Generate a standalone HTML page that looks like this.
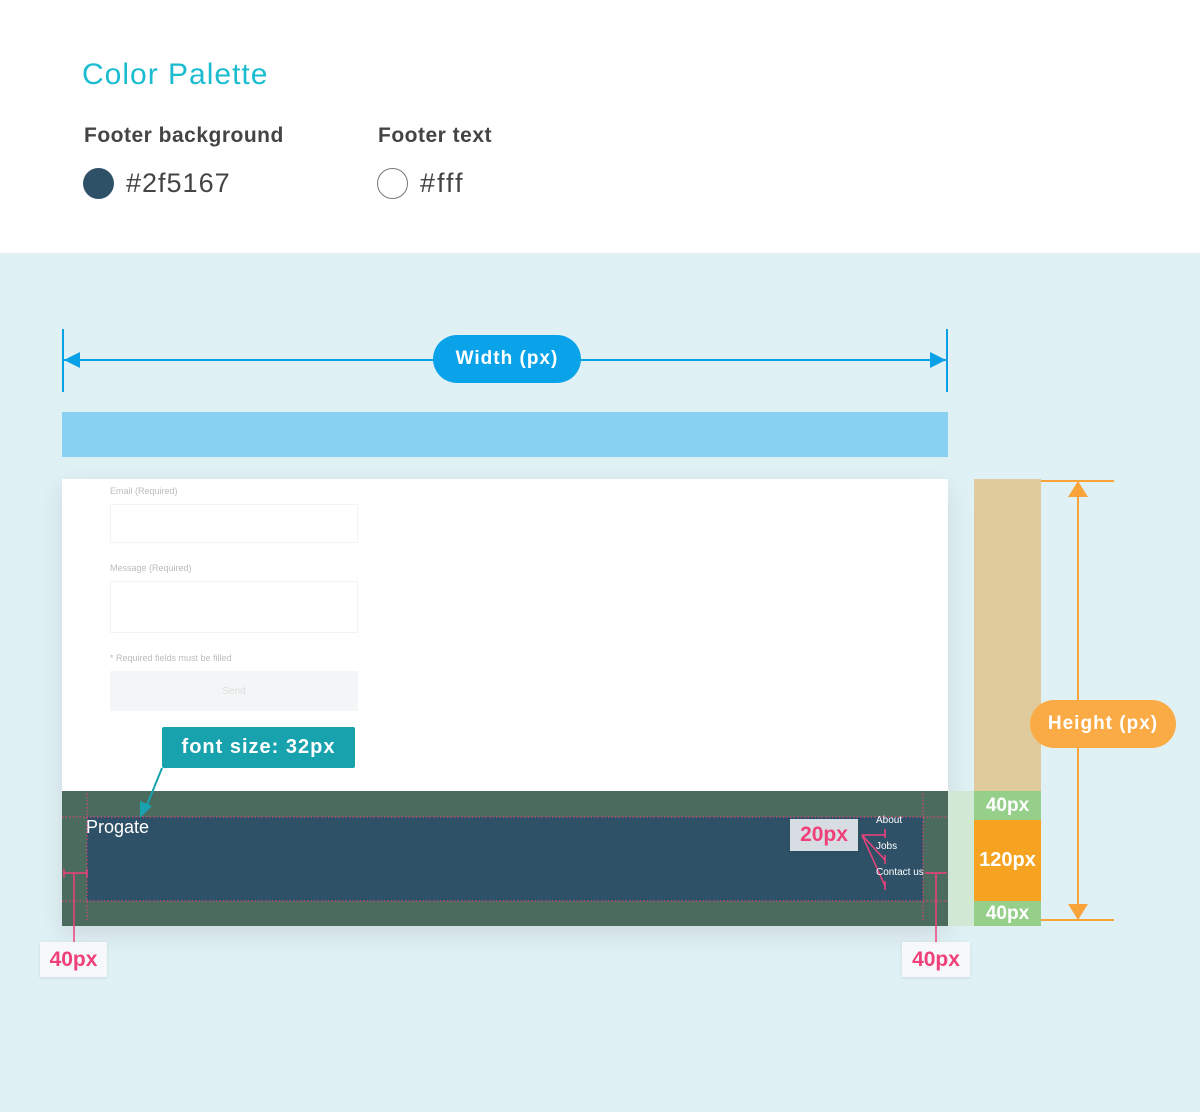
<!DOCTYPE html>
<html><head><meta charset="utf-8"><style>
*{margin:0;padding:0;box-sizing:border-box}
body{width:1200px;height:1112px;position:relative;overflow:hidden;font-family:"Liberation Sans",sans-serif;background:#e0f1f6}
.a{position:absolute}
.top{left:0;top:0;width:1200px;height:253px;background:#fff}
.pill{position:absolute;color:#fff;font-weight:bold;border-radius:24px;display:flex;align-items:center;justify-content:center;letter-spacing:1px}
.lab{position:absolute;background:#f6f8f9;color:#f0407a;font-weight:bold;font-size:21px;display:flex;align-items:center;justify-content:center;box-shadow:0 1px 3px rgba(0,0,0,.1)}
.f{font-size:9px;color:#bbb}
</style></head><body>
<div class="a top"></div>
<div class="a" style="left:82px;top:58px;font-size:30px;color:#1bbcd0;letter-spacing:1px">Color Palette</div>
<div class="a" style="left:84px;top:124px;font-size:21px;color:#444;font-weight:bold;letter-spacing:.5px">Footer background</div>
<div class="a" style="left:378px;top:124px;font-size:21px;color:#444;font-weight:bold;letter-spacing:.5px">Footer text</div>
<div class="a" style="left:83px;top:168px;width:31px;height:31px;border-radius:50%;background:#2f5167"></div>
<div class="a" style="left:126px;top:168px;font-size:27px;color:#444;letter-spacing:1px">#2f5167</div>
<div class="a" style="left:377px;top:168px;width:31px;height:31px;border-radius:50%;border:1px solid #777"></div>
<div class="a" style="left:420px;top:168px;font-size:27px;color:#444;letter-spacing:2px">#fff</div>

<svg class="a" style="left:0;top:0" width="1200" height="1112">
<g stroke="#0aa0e6" stroke-width="2" fill="#0aa0e6">
<line x1="63" y1="329" x2="63" y2="392"/><line x1="947" y1="329" x2="947" y2="392"/>
<line x1="64" y1="360" x2="946" y2="360"/>
<polygon points="64,360 80,352 80,368" stroke="none"/><polygon points="946,360 930,352 930,368" stroke="none"/>
</g>
<g stroke="#f9a43a" stroke-width="2" fill="#f9a43a">
<line x1="1041" y1="481" x2="1114" y2="481"/><line x1="1041" y1="920" x2="1114" y2="920"/>
<line x1="1078" y1="482" x2="1078" y2="919"/>
<polygon points="1078,481 1068,497 1088,497" stroke="none"/><polygon points="1078,920 1068,904 1088,904" stroke="none"/>
</g>
</svg>
<div class="pill" style="left:433px;top:335px;width:148px;height:48px;background:#0aa3ea;font-size:19px">Width (px)</div>
<div class="a" style="left:62px;top:412px;width:886px;height:45px;background:#88d1f2"></div>

<div class="a" style="left:62px;top:479px;width:886px;height:447px;background:#fff;box-shadow:0 8px 24px rgba(0,0,0,.1)"></div>
<div class="a f" style="left:110px;top:486px">Email (Required)</div>
<div class="a" style="left:110px;top:504px;width:248px;height:39px;border:1px solid #f3f3f3"></div>
<div class="a f" style="left:110px;top:563px">Message (Required)</div>
<div class="a" style="left:110px;top:581px;width:248px;height:52px;border:1px solid #f3f3f3"></div>
<div class="a f" style="left:110px;top:653px">* Required fields must be filled</div>
<div class="a" style="left:110px;top:671px;width:248px;height:40px;background:#f3f6f7;color:#ddd;font-size:10px;display:flex;align-items:center;justify-content:center">Send</div>

<div class="a" style="left:62px;top:791px;width:886px;height:135px;background:#4a6b5e"></div>
<div class="a" style="left:87px;top:817px;width:836px;height:84px;background:#2f5167"></div>
<svg class="a" style="left:0;top:0" width="1200" height="1112">
<g stroke="#f0407a" stroke-width="1" stroke-dasharray="1.5 2" fill="none">
<line x1="62" y1="817" x2="948" y2="817"/><line x1="62" y1="901" x2="948" y2="901"/>
<line x1="87" y1="793" x2="87" y2="920"/><line x1="923" y1="793" x2="923" y2="920"/>
</g>
<g stroke="#f0407a" stroke-width="1.5" fill="none">
<line x1="64" y1="873" x2="87" y2="873"/><line x1="64" y1="869" x2="64" y2="877"/><line x1="87" y1="869" x2="87" y2="877"/>
<line x1="74" y1="873" x2="74" y2="943"/>
<line x1="925" y1="873" x2="947" y2="873"/><line x1="936" y1="873" x2="936" y2="943"/>
<line x1="862" y1="835" x2="885" y2="835"/><line x1="862" y1="835" x2="885" y2="860"/><line x1="862" y1="835" x2="885" y2="886"/>
<line x1="885" y1="829" x2="885" y2="838"/><line x1="885" y1="855" x2="885" y2="864"/><line x1="885" y1="881" x2="885" y2="890"/>
</g>
<g stroke="#f5a321" stroke-width="2" stroke-dasharray="6 4"><line x1="948" y1="820" x2="974" y2="820"/><line x1="948" y1="901" x2="974" y2="901"/></g>
<line x1="162" y1="768" x2="145" y2="810" stroke="#17a2ad" stroke-width="2"/>
<polygon points="140,818 140,801 152,806" fill="#17a2ad"/>
</svg>
<div class="a" style="left:86px;top:817px;font-size:18px;color:#fff">Progate</div>
<div class="a" style="left:876px;top:815px;font-size:10px;color:#fff">About</div>
<div class="a" style="left:876px;top:841px;font-size:10px;color:#fff">Jobs</div>
<div class="a" style="left:876px;top:867px;font-size:10px;color:#fff">Contact us</div>
<div class="lab" style="left:790px;top:819px;width:68px;height:32px;background:#d7dde3">20px</div>
<div class="lab" style="left:40px;top:942px;width:67px;height:35px">40px</div>
<div class="lab" style="left:902px;top:942px;width:68px;height:35px">40px</div>
<div class="pill" style="left:162px;top:727px;width:193px;height:41px;background:#17a2ad;border-radius:2px;font-size:20px">font size: 32px</div>

<div class="a" style="left:948px;top:791px;width:26px;height:135px;background:#d1e9d4"></div>
<div class="a" style="left:974px;top:479px;width:67px;height:312px;background:#e0cb9c"></div>
<div class="a" style="left:974px;top:791px;width:67px;height:29px;background:#95cf8a;color:#fff;font-weight:bold;font-size:19px;text-align:center;line-height:29px">40px</div>
<div class="a" style="left:974px;top:820px;width:67px;height:81px;background:#f5a321;color:#fff;font-weight:bold;font-size:20px;text-align:center;line-height:81px">120px</div>
<div class="a" style="left:974px;top:901px;width:67px;height:25px;background:#95cf8a;color:#fff;font-weight:bold;font-size:19px;text-align:center;line-height:25px">40px</div>
<div class="pill" style="left:1030px;top:700px;width:146px;height:48px;background:#fbab45;font-size:19px">Height (px)</div>
</body></html>
